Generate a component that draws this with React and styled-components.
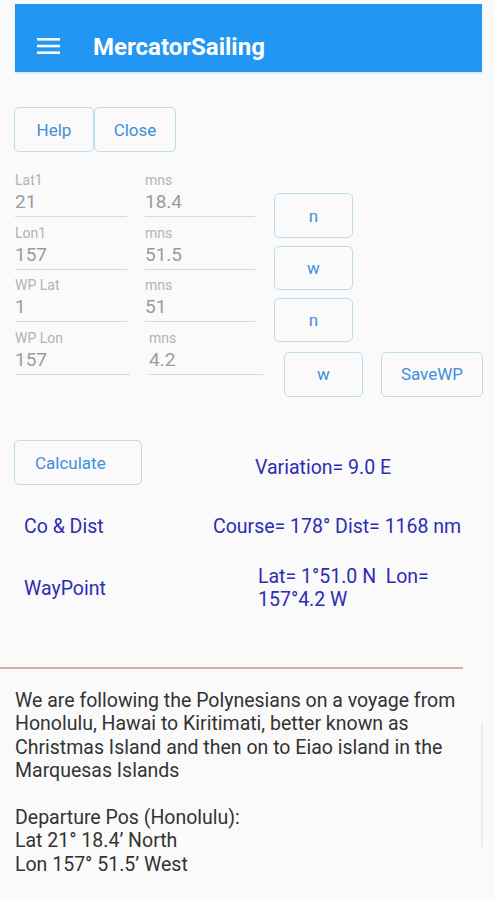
import React from "react";
import styled, { createGlobalStyle } from "styled-components";

const GlobalStyle = createGlobalStyle`
  html, body {
    margin: 0;
    padding: 0;
    background: #fafafa;
    font-family: Roboto, "Liberation Sans", sans-serif;
  }
`;

const Page = styled.div`
  width: 494px;
  min-height: 900px;
  background: #fafafa;
  overflow: hidden;
`;

const AppBar = styled.header`
  margin: 4px 12px 0 15px;
  height: 68px;
  box-sizing: border-box;
  background: #2196f3;
  display: flex;
  align-items: flex-end;
  padding: 0 0 17px 22px;
  gap: 32px;
  box-shadow: 0 1px 2px rgba(0, 0, 0, 0.15);
`;

const Title = styled.h1`
  margin: 0 0 -4px 0;
  color: #fff;
  font-size: 24px;
  line-height: 24px;
  font-weight: 700;
`;

const Content = styled.main`
  padding: 35px 0 0 14px;
  display: flex;
  flex-direction: column;
`;

const ButtonRow = styled.div`
  display: flex;
`;

const OutlineButton = styled.button`
  width: ${(p) => p.$w || 80}px;
  height: ${(p) => p.$h || 45}px;
  margin-top: ${(p) => p.$top || 0}px;
  margin-left: ${(p) => p.$left || 0}px;
  flex-shrink: 0;
  background: transparent;
  border: 1px solid #bcdcf0;
  border-radius: 5px;
  color: #3f8fd8;
  font-family: Roboto, "Liberation Sans", sans-serif;
  font-size: ${(p) => p.$size || 17}px;
  padding: 0;
  text-align: ${(p) => (p.$align ? p.$align : "center")};
  padding-left: ${(p) => p.$pad || 0}px;
`;

const FieldRows = styled.div`
  margin-top: 20px;
  display: flex;
  flex-direction: column;
`;

const FieldRow = styled.div`
  display: flex;
  align-items: flex-start;
  height: ${(p) => p.$h || 52.5}px;
  padding-left: 1px;
`;

const Field = styled.div`
  width: ${(p) => p.$w}px;
  margin-left: ${(p) => p.$left || 0}px;
  flex-shrink: 0;
  display: flex;
  flex-direction: column;
`;

const FieldLabel = styled.label`
  font-size: 14px;
  line-height: 15px;
  height: 15px;
  padding-top: 1px;
  color: #b3b3b3;
`;

const FieldValue = styled.div`
  height: 28px;
  line-height: 28px;
  font-size: 19px;
  color: #9c9c9c;
  border-bottom: 1px solid #d9d9d9;
`;

const Results = styled.section`
  margin-top: 58px;
  display: flex;
  flex-direction: column;
`;

const ResultRow = styled.div`
  display: flex;
  align-items: center;
  height: ${(p) => p.$h}px;
`;

const ResultLabel = styled.div`
  width: ${(p) => p.$w}px;
  padding-left: 10px;
  flex-shrink: 0;
  font-size: 19.5px;
  color: #2c2cb4;
`;

const ResultValue = styled.div`
  margin-left: ${(p) => p.$left}px;
  padding-top: ${(p) => p.$drop || 0}px;
  font-size: 19.5px;
  line-height: 23px;
  color: #2c2cb4;
  white-space: nowrap;
`;

const Divider = styled.hr`
  margin: 58px 0 0 0;
  width: 463px;
  border: none;
  height: 2px;
  background: #e6a7a7;
`;

const Story = styled.section`
  position: relative;
  padding: 20px 0 0 15px;
`;

const Line = styled.div`
  font-size: 19.5px;
  line-height: 23.4px;
  height: 23.4px;
  color: #333;
  white-space: nowrap;
`;

const ScrollThumb = styled.div`
  position: absolute;
  left: 481px;
  top: 54px;
  width: 2px;
  height: 124px;
  background: #ececec;
`;

function MenuIcon() {
  return (
    <svg width="24" height="18" viewBox="0 0 24 18">
      <rect x="0" y="1" width="23" height="2.6" fill="#fff" />
      <rect x="0" y="7.7" width="23" height="2.6" fill="#fff" />
      <rect x="0" y="14.4" width="23" height="2.6" fill="#fff" />
    </svg>
  );
}

const storyLines = [
  "We are following the Polynesians on a voyage from",
  "Honolulu, Hawai to Kiritimati, better known as",
  "Christmas Island and then on to Eiao island in the",
  "Marquesas Islands",
  "",
  "Departure Pos (Honolulu):",
  "Lat 21\u00b0 18.4\u2019 North",
  "Lon 157\u00b0 51.5\u2019 West",
];

export default function App() {
  return (
    <Page>
      <GlobalStyle />
      <AppBar>
        <MenuIcon />
        <Title>MercatorSailing</Title>
      </AppBar>

      <Content>
        <ButtonRow>
          <OutlineButton $w={80} $h={45}>Help</OutlineButton>
          <OutlineButton $w={82} $h={45}>Close</OutlineButton>
        </ButtonRow>

        <FieldRows>
          <FieldRow>
            <Field $w={112}>
              <FieldLabel>Lat1</FieldLabel>
              <FieldValue>21</FieldValue>
            </Field>
            <Field $w={110} $left={18}>
              <FieldLabel>mns</FieldLabel>
              <FieldValue>18.4</FieldValue>
            </Field>
            <OutlineButton $w={79} $top={21} $left={19}>n</OutlineButton>
          </FieldRow>
          <FieldRow>
            <Field $w={112}>
              <FieldLabel>Lon1</FieldLabel>
              <FieldValue>157</FieldValue>
            </Field>
            <Field $w={110} $left={18}>
              <FieldLabel>mns</FieldLabel>
              <FieldValue>51.5</FieldValue>
            </Field>
            <OutlineButton $w={79} $h={44} $top={21} $left={19}>w</OutlineButton>
          </FieldRow>
          <FieldRow>
            <Field $w={112}>
              <FieldLabel>WP Lat</FieldLabel>
              <FieldValue>1</FieldValue>
            </Field>
            <Field $w={110} $left={18}>
              <FieldLabel>mns</FieldLabel>
              <FieldValue>51</FieldValue>
            </Field>
            <OutlineButton $w={79} $h={44} $top={21} $left={19}>n</OutlineButton>
          </FieldRow>
          <FieldRow>
            <Field $w={115}>
              <FieldLabel>WP Lon</FieldLabel>
              <FieldValue>157</FieldValue>
            </Field>
            <Field $w={114} $left={19}>
              <FieldLabel>mns</FieldLabel>
              <FieldValue>4.2</FieldValue>
            </Field>
            <OutlineButton $w={79} $top={22} $left={21}>w</OutlineButton>
            <OutlineButton $w={102} $top={22} $left={18}>SaveWP</OutlineButton>
          </FieldRow>
        </FieldRows>

        <Results>
          <ResultRow $h={45}>
            <OutlineButton $w={128} $h={45} $align="left" $pad={20}>
              Calculate
            </OutlineButton>
            <ResultValue $left={113} $drop={9}>Variation= 9.0 E</ResultValue>
          </ResultRow>
          <ResultRow $h={82}>
            <ResultLabel $w={189}>Co &amp; Dist</ResultLabel>
            <ResultValue $left={0}>Course= 178° Dist= 1168 nm</ResultValue>
          </ResultRow>
          <ResultRow $h={42}>
            <ResultLabel $w={234}>WayPoint</ResultLabel>
            <ResultValue $left={0}>
              Lat= 1°51.0 N&nbsp; Lon=
              <br />
              157°4.2 W
            </ResultValue>
          </ResultRow>
        </Results>
      </Content>

      <Divider />

      <Story>
        {storyLines.map((t, i) => (
          <Line key={i}>{t}</Line>
        ))}
        <ScrollThumb />
      </Story>
    </Page>
  );
}
